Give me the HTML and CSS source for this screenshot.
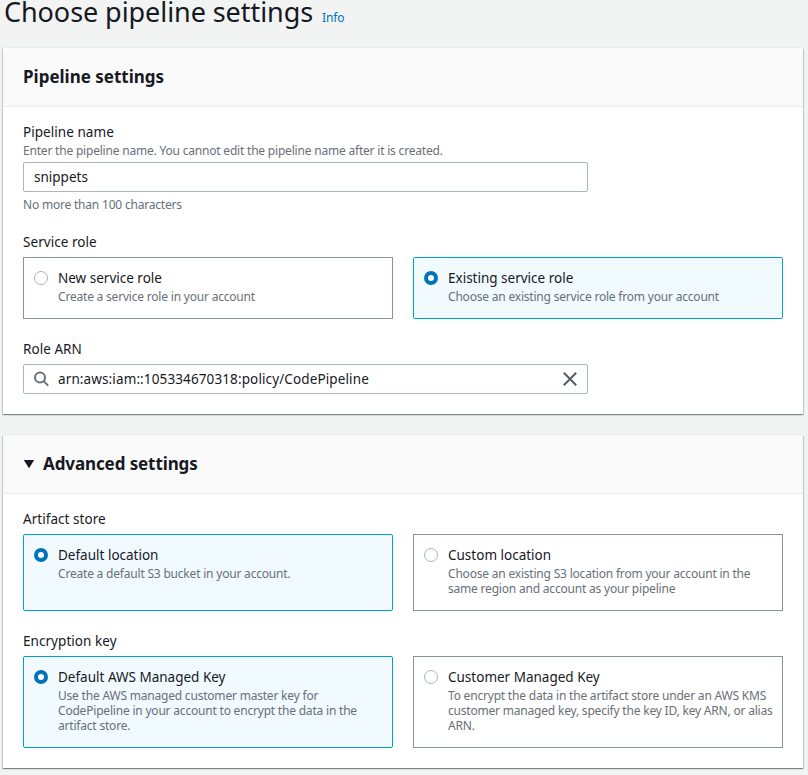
FILE: index.html
```html
<!DOCTYPE html>
<html lang="en">
<head>
<meta charset="utf-8">
<title>Choose pipeline settings</title>
<link rel="stylesheet" href="styles.css">
</head>
<body>
<header class="page-header">
  <h1>Choose pipeline settings</h1>
  <a class="info">Info</a>
</header>
<main>
  <section class="panel">
    <div class="panel-header"><h2 class="wide">Pipeline settings</h2></div>
    <div class="panel-body">
      <div class="field">
        <div class="label">Pipeline name</div>
        <div class="hint">Enter the pipeline name. You cannot edit the pipeline name after it is created.</div>
        <div class="input">snippets</div>
        <div class="constraint">No more than 100 characters</div>
      </div>
      <div class="field">
        <div class="label">Service role</div>
        <div class="tiles">
          <div class="tile">
            <span class="radio"></span>
            <div><div class="title">New service role</div><div class="desc">Create a service role in your account</div></div>
          </div>
          <div class="tile selected">
            <span class="radio"></span>
            <div><div class="title">Existing service role</div><div class="desc">Choose an existing service role from your account</div></div>
          </div>
        </div>
      </div>
      <div class="field">
        <div class="label">Role ARN</div>
        <div class="input">
          <svg class="search" width="16" height="16" viewBox="0 0 16 16"><circle cx="6" cy="6.5" r="5"/><path d="M9.6 10.1 14.2 14.6"/></svg>
          <span class="arn">arn:aws:iam::105334670318:policy/CodePipeline</span>
          <svg class="clear" width="14" height="14" viewBox="0 0 14 14"><path d="M.8.8 13.2 13.2M13.2.8.8 13.2"/></svg>
        </div>
      </div>
    </div>
  </section>
  <section class="panel">
    <div class="panel-header">
      <svg class="caret" width="12" height="10" viewBox="0 0 12 10"><path d="M.8 1H11.2L6 9.2Z"/></svg>
      <h2>Advanced settings</h2>
    </div>
    <div class="panel-body">
      <div class="field">
        <div class="label">Artifact store</div>
        <div class="tiles">
          <div class="tile selected">
            <span class="radio"></span>
            <div><div class="title">Default location</div><div class="desc">Create a default S3 bucket in your account.</div></div>
          </div>
          <div class="tile">
            <span class="radio"></span>
            <div><div class="title">Custom location</div><div class="desc">Choose an existing S3 location from your account in the<br>same region and account as your pipeline</div></div>
          </div>
        </div>
      </div>
      <div class="field">
        <div class="label">Encryption key</div>
        <div class="tiles">
          <div class="tile selected">
            <span class="radio"></span>
            <div><div class="title">Default AWS Managed Key</div><div class="desc">Use the AWS managed customer master key for<br>CodePipeline in your account to encrypt the data in the<br>artifact store.</div></div>
          </div>
          <div class="tile">
            <span class="radio"></span>
            <div><div class="title">Customer Managed Key</div><div class="desc">To encrypt the data in the artifact store under an AWS KMS<br>customer managed key, specify the key ID, key ARN, or alias<br>ARN.</div></div>
          </div>
        </div>
      </div>
    </div>
  </section>
</main>
</body>
</html>
```
FILE: styles.css
```css
* { box-sizing: border-box; }
body {
  margin: 0;
  height: 775px;
  overflow: hidden;
  background: #f2f3f3;
  color: #16191f;
  font: 13.5px/22px "Noto Sans", sans-serif;
  white-space: nowrap;
}
h1, h2 { margin: 0; }
.page-header {
  display: flex;
  align-items: baseline;
  gap: 9px;
  height: 48px;
  padding-left: 4px;
}
h1 {
  font-size: 27px;
  line-height: 24px;
  font-weight: 400;
  letter-spacing: -0.07px;
}
.info { color: #0073bb; font-size: 12px; line-height: 16px; letter-spacing: -0.15px; }
main {
  display: flex;
  flex-direction: column;
  gap: 21px;
  width: 800px;
  margin-left: 3px;
}
.panel {
  background: #fff;
  box-shadow: 0 1px 1px 0 rgba(0, 28, 36, .3), 1px 1px 1px 0 rgba(0, 28, 36, .15), -1px 1px 1px 0 rgba(0, 28, 36, .15), 0 -1px 0 #eaeded;
}
.panel-header {
  display: flex;
  align-items: center;
  gap: 8px;
  height: 59px;
  padding: 0 20px;
  background: #fafafa;
  border-bottom: 1px solid #eaeded;
}
h2 { font-size: 17px; line-height: 22px; font-weight: 700; letter-spacing: -0.1px; }
h2.wide { letter-spacing: 0; }
.caret { fill: #16191f; }
.panel-body {
  display: flex;
  flex-direction: column;
  gap: 19px;
  padding: 14px 20px 20px;
}
.label { margin-bottom: 4px; letter-spacing: 0.05px; }
.hint, .desc, .constraint {
  color: #687078;
  font-size: 12px;
  line-height: 15px;
  letter-spacing: -0.2px;
}
.hint { margin: -4px 0 4px; }
.constraint { margin-top: 5px; }
.input {
  display: flex;
  align-items: center;
  width: 565px;
  height: 30px;
  padding: 0 10px;
  border: 1px solid #aab7b8;
  border-radius: 2px;
  background: #fff;
}
.search, .clear { fill: none; stroke: #545b64; stroke-width: 2; }
.search { stroke: #687078; }
.arn { margin-left: 8px; letter-spacing: 0.12px; }
.clear { margin-left: auto; }
.tiles { display: grid; grid-template-columns: 370px 370px; gap: 20px; }
.tile {
  display: flex;
  gap: 10px;
  padding: 9px 10px 14px;
  border: 1px solid #879596;
}
.tile.selected { background: #f1faff; border-color: #00a1c9; border-radius: 2px; }
.radio {
  flex: none;
  width: 14px;
  height: 14px;
  margin-top: 4px;
  border: 1px solid #aab7b8;
  border-radius: 50%;
  background: #fff;
}
.selected .radio { border: 4px solid #0073bb; }
```
